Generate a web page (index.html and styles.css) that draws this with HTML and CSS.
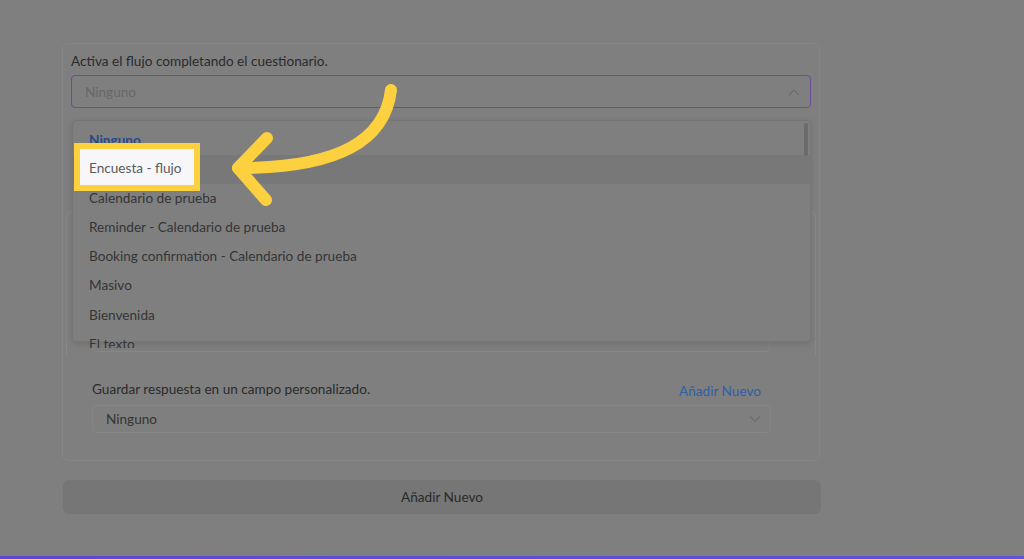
FILE: index.html
```html
<!DOCTYPE html>
<html lang="es">
<head>
<meta charset="utf-8">
<title>Flujo</title>
<link rel="stylesheet" href="styles.css">
</head>
<body>
<div class="page">
  <main class="content">
    <div class="card">
      <div class="label">Activa el flujo completando el cuestionario.</div>
      <div class="select select-open">
        <span class="placeholder">Ninguno</span>
        <svg class="chev" width="12" height="8" viewBox="0 0 12 8"><path d="M1 7 L6 2 L11 7" fill="none" stroke="#6c6c6c" stroke-width="1.2"/></svg>
      </div>
      <div class="section">
        <div class="fields">
          <div class="select select-small"></div>
        </div>
      </div>
      <div class="fields">
        <div class="field-head">
          <span class="label2">Guardar respuesta en un campo personalizado.</span>
          <span class="link">Añadir Nuevo</span>
        </div>
        <div class="select select-small">
          <span class="value">Ninguno</span>
          <svg class="chev" width="12" height="8" viewBox="0 0 12 8"><path d="M1 1.5 L6 6.5 L11 1.5" fill="none" stroke="#6c6c6c" stroke-width="1.2"/></svg>
        </div>
      </div>
    </div>
    <div class="add">Añadir Nuevo</div>

    <div class="dropdown">
      <ul class="options">
        <li class="opt opt-active">Ninguno</li>
        <li class="opt opt-hover">Encuesta - flujo</li>
        <li class="opt">Calendario de prueba</li>
        <li class="opt">Reminder - Calendario de prueba</li>
        <li class="opt">Booking confirmation - Calendario de prueba</li>
        <li class="opt">Masivo</li>
        <li class="opt">Bienvenida</li>
        <li class="opt">El texto</li>
      </ul>
      <div class="scroll-thumb"></div>
    </div>

    <div class="spot">Encuesta - flujo</div>

    <svg class="arrow" width="1024" height="559" viewBox="0 0 1024 559">
      <g fill="none" stroke="#fcd03f" stroke-width="12" stroke-linecap="round" stroke-linejoin="round">
        <path d="M391 90 C385 140 340 168 238 168"/>
        <path d="M267 138 L238 168 L266 200"/>
      </g>
    </svg>
  </main>
  <div class="bar"></div>
</div>
</body>
</html>
```

FILE: styles.css
```css
* { box-sizing: border-box; }
html, body { margin: 0; padding: 0; }
body {
  background: #7f7f7f;
  font-family: Lato, "Noto Sans", sans-serif;
  font-size: 13.6px;
  color: #303030;
}
.page {
  height: 559px;
  display: flex;
  flex-direction: column;
}
.content {
  position: relative;
  flex: 1;
  padding: 43px 0 0 62px;
}
.card {
  width: 758px;
  border: 1px solid #868686;
  border-radius: 6px;
  padding: 8px 8px 27px 8px;
}
.label {
  line-height: 18px;
  color: #2b2b2b;
}
.select {
  display: flex;
  align-items: center;
  justify-content: space-between;
  border-radius: 4px;
}
.select-open {
  margin-top: 5px;
  height: 33px;
  border: 1.5px solid #6a4c9c;
  padding: 0 10px 0 13px;
}
.placeholder { color: #686868; }
.section {
  margin: 103px -5px 0 -5px;
  height: 145px;
  border-top: 1px solid #878787;
  border-left: 1px solid #878787;
  border-right: 1px solid #878787;
  border-radius: 6px 6px 0 0;
  display: flex;
  flex-direction: column;
  justify-content: flex-end;
  padding: 0 0 4px 0;
}
.section .fields { padding: 0 45px 0 26px; }
.fields {
  padding: 0 40px 0 21px;
}
.field-head {
  display: flex;
  justify-content: space-between;
  align-items: center;
  height: 20px;
  margin-top: 23px;
}
.label2 { color: #2b2b2b; }
.link { color: #2f5fa8; margin-right: 10px; margin-top: 3px; }
.select-small {
  margin-top: 6px;
  height: 28px;
  border: 1px solid #868686;
  padding: 0 9px 0 13px;
}
.value { color: #343434; }
.add {
  margin-top: 19px;
  width: 758px;
  height: 34px;
  margin-left: 1px;
  background: #767676;
  border-radius: 6px;
  display: flex;
  align-items: center;
  justify-content: center;
  color: #2a2a2a;
}
.dropdown {
  position: absolute;
  left: 72px;
  top: 120px;
  width: 739px;
  height: 222px;
  background: #7f7f7f;
  border: 1px solid #767676;
  border-radius: 4px;
  box-shadow: 0 2px 6px rgba(0,0,0,0.12);
}
.options {
  list-style: none;
  margin: 0;
  padding: 4.5px 0 0 0;
  height: 227px;
  overflow: hidden;
}
.opt {
  height: 29.2px;
  line-height: 29.2px;
  padding-left: 16px;
  color: #353535;
  white-space: nowrap;
}
.opt-active { color: #27498a; font-weight: 700; }
.opt-hover { background: #787878; }
.scroll-thumb {
  position: absolute;
  right: 2px;
  top: 2px;
  width: 4px;
  height: 33px;
  border-radius: 2px;
  background: #6b6b6b;
}
.spot {
  position: absolute;
  left: 74px;
  top: 143px;
  width: 126px;
  height: 48px;
  border: 6px solid #fcd03f;
  background: #f7f7fa;
  display: flex;
  align-items: center;
  padding: 2px 0 0 9px;
  color: #5a5a5a;
}
.arrow {
  position: absolute;
  left: 0;
  top: 0;
  pointer-events: none;
}
.bar {
  height: 3px;
  background: linear-gradient(90deg, #5d48d6, #6152d8);
}
```
